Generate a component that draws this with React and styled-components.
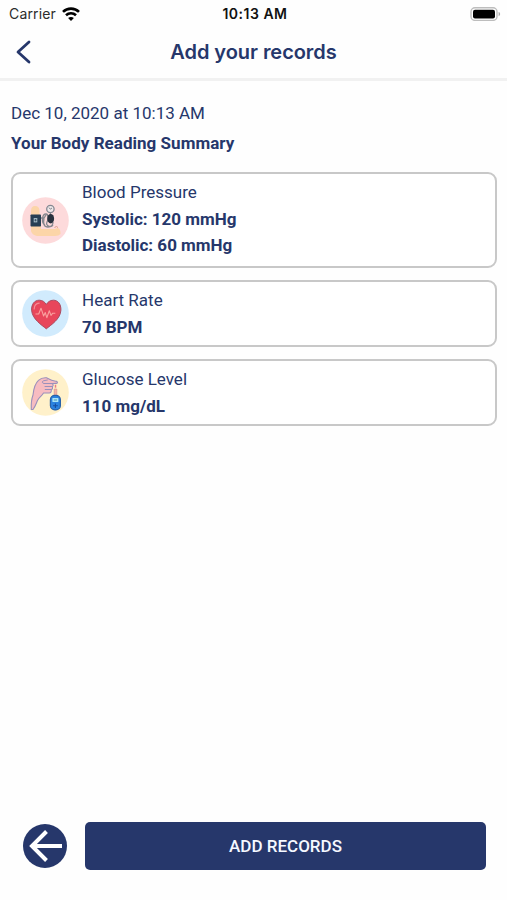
import React from "react";
import styled, { createGlobalStyle } from "styled-components";

const GlobalStyle = createGlobalStyle`
  * {
    box-sizing: border-box;
  }
  body {
    margin: 0;
    background: #fefefe;
    color: #26376b;
    font-family: Roboto, sans-serif;
  }
`;

const Screen = styled.div`
  display: flex;
  flex-direction: column;
  height: 900px;
  width: 507px;
  overflow: hidden;
`;

const StatusBar = styled.div`
  display: grid;
  grid-template-columns: 1fr auto 1fr;
  align-items: center;
  height: 27px;
  padding: 0 6px 0 9px;
  color: #111;
  font-family: Inter, sans-serif;
`;

const Carrier = styled.div`
  display: flex;
  align-items: center;
  gap: 6px;
  font-size: 14px;
  letter-spacing: 0.15px;
  color: #2c2c2c;
`;

const Clock = styled.div`
  font-size: 14px;
  font-weight: 600;
  letter-spacing: 0.5px;
`;

const StyledBattery = styled.svg`
  justify-self: end;
  display: block;
`;

const Header = styled.header`
  display: grid;
  grid-template-columns: 48px 1fr 48px;
  align-items: center;
  height: 54px;
  padding-bottom: 2px;
  border-bottom: 3px solid #f1f1f1;
`;

const BackLink = styled.a`
  display: flex;
  padding-left: 15px;
  cursor: pointer;
`;

const Title = styled.h1`
  margin: 0;
  font-family: Inter, sans-serif;
  font-size: 20px;
  font-weight: 600;
  letter-spacing: -0.05px;
  text-align: center;
`;

const Content = styled.main`
  flex: 1;
  padding: 17px 10px 0 11px;
`;

const DateText = styled.p`
  margin: 0;
  font-size: 17px;
  line-height: 30px;
`;

const Subtitle = styled.h2`
  margin: 0 0 14px;
  font-size: 17px;
  font-weight: 700;
  letter-spacing: 0.03px;
  line-height: 30px;
`;

const Card = styled.section`
  display: flex;
  align-items: center;
  gap: 13px;
  height: ${(props) => (props.$tall ? "96px" : "67px")};
  margin-bottom: 12px;
  padding: 5px 9px;
  border: 2px solid #c8c8c8;
  border-radius: 9px;
  background: white;
`;

const Reading = styled.div`
  align-self: flex-start;
`;

const Label = styled.p`
  margin: 0;
  font-size: 17px;
  line-height: 26.5px;
`;

const Value = styled.p`
  margin: 0;
  font-size: 17px;
  font-weight: 700;
  line-height: 26.5px;
`;

const CardIcon = styled.svg`
  display: block;
  width: 47px;
  height: 47px;
  flex-shrink: 0;
`;

const Footer = styled.footer`
  display: flex;
  align-items: center;
  gap: 18px;
  padding: 0 21px 30px 23px;
`;

const RoundButton = styled.button`
  display: flex;
  align-items: center;
  justify-content: center;
  width: 44px;
  height: 44px;
  padding: 0;
  border: 0;
  border-radius: 50%;
  background: #26376b;
  cursor: pointer;
`;

const AddButton = styled.button`
  flex: 1;
  height: 48px;
  padding: 0;
  border: 0;
  border-radius: 5px;
  background: #26376b;
  color: #f5f8ff;
  font-family: Roboto, sans-serif;
  font-size: 17px;
  font-weight: 500;
  cursor: pointer;
`;

const WifiIcon = () => (
  <svg width="18" height="14" viewBox="0 0 18 14" fill="none" stroke="#000" strokeWidth="2.6">
    <path d="M1 4.9C5.4 .5 12.6 .5 17 4.9" />
    <path d="M4 8.3c2.8-2.7 7.2-2.7 10 0" />
    <path d="M9 13.9 6.1 11c1.7-1.5 4.1-1.5 5.8 0Z" fill="#000" stroke="none" />
  </svg>
);

const BatteryIcon = () => (
  <StyledBattery width="31" height="14" viewBox="0 0 31 14">
    <rect x="1" y="0.8" width="26" height="12.6" rx="4" fill="#fff" stroke="#bdbdbd" strokeWidth="1.4" />
    <rect x="3" y="2.8" width="22" height="8.6" rx="2" fill="#000" />
    <path d="M28.6 5v4.2c2-.7 2-3.5 0-4.2Z" fill="#a9a9a9" />
  </StyledBattery>
);

const BloodPressureIcon = () => (
  <CardIcon viewBox="0 0 47 47" fill="none">
    <circle cx="23.5" cy="23.5" r="23.3" fill="#fddadb" />
    <path d="M9 18V14q0-5 4-5 4.5 0 4.5 5v4ZM9 29h10v3h14c3.5-3 6 1 5.5 5Q37 39 33 39H15q-5-1-6-5Z" fill="#fcd5a8" />
    <path d="M19 21h3l2-3M23 28c-4-2-3-11 1-11 3 0 2 7 1 8-2 4 4 6 6 3M22 21c-1 6 0 9 4 9s5-3 5-5" stroke="#85868d" strokeWidth="1.3" />
    <rect x="8.5" y="17.5" width="10.5" height="12" rx=".8" fill="#263f53" />
    <rect x="11.7" y="21" width="3.6" height="4.4" fill="#9bb3bd" />
    <path d="M13.5 22v2.4M12.3 23.2h2.4" stroke="#263f53" strokeWidth=".7" />
    <circle cx="28.4" cy="12" r="3.7" fill="#eee7e8" stroke="#858891" strokeWidth="1.3" />
    <path d="m27 10.6 1.5 1.6 1.4-1.2M28.4 15.8v2" stroke="#777b83" />
    <ellipse cx="28.7" cy="21.7" rx="3.4" ry="4.8" fill="#29323e" />
    <path d="M32.5 30.5q2-2 3.5 0" stroke="#df9b87" />
  </CardIcon>
);

const HeartIcon = () => (
  <CardIcon viewBox="0 0 47 47" fill="none">
    <circle cx="23.5" cy="23.5" r="23.3" fill="#d1ebfd" />
    <path
      d="M24.3 38.8C20 35.2 10.2 29.2 9.6 20.2 9.4 14 12.6 10.2 17.2 10.2c3.5 0 5.7 1.9 7.1 4.3 1.4-2.4 3.7-4.3 7.1-4.3 4.6 0 7.7 3.8 7.5 10-.4 9-10.3 15-14.6 18.6Z"
      fill="#e8465b"
      stroke="#a94c61"
      strokeWidth="1"
    />
    <path d="M12.2 19c.1-3.7 2-5.8 5-5.9" stroke="#f58a94" strokeWidth="1.2" strokeLinecap="round" />
    <path
      d="M13.5 24h3.2l2.3-5.8 2.6 7.8 1.7-3.4 1.5 5.1 2.5-7 1.7 4.7 1.7-2.2h2.6"
      stroke="#f9a09f"
      strokeWidth="1.1"
      strokeLinejoin="round"
    />
  </CardIcon>
);

const GlucoseIcon = () => (
  <CardIcon viewBox="0 0 47 47" fill="none">
    <circle cx="23.5" cy="23.5" r="23.3" fill="#fff1ca" />
    <path
      d="M9.3 40.5C9 34 9.5 30 11 26c.5-5 1.3-11 5.5-14.7 2-1.9 5.5-2.7 8-2.5l3 1.5c2.4 1.4 4.8 1.5 7.2 2.1 1.3.5.8 2-.5 2l-4.2.1c1.5.8 1.6 2.5.2 3 .8 1.5.3 2.7-1 3 .4 2-.3 3.3-2 3.5h-5.7c-1.5 3-4.5 4-6 7.5-1.3 3-2.2 6-4.5 9Z"
      fill="#f7bcc1"
      stroke="#9a90bb"
      strokeWidth="1.1"
      strokeLinejoin="round"
    />
    <path d="M30 14.5h-8c-1.8-.2-2.3-2-.6-2.7l4-.8M30.2 17.5H23M29.2 20.5h-6" stroke="#9a90bb" strokeWidth="1" strokeLinecap="round" />
    <path d="M33.5 15.7v3" stroke="#ee7c83" strokeWidth="1.5" />
    <path d="M32.2 20h2.6v7h-2.6Z" fill="#f4b5a5" stroke="#d58c8c" strokeWidth=".6" />
    <rect x="28.4" y="26.3" width="10" height="14.6" rx="4.4" fill="#2b82df" stroke="#2862a9" strokeWidth="1.2" />
    <rect x="30.4" y="29" width="6" height="4.1" rx=".6" fill="#a9e4f5" />
    <path d="M31.8 31h3.2" stroke="#387ca7" strokeWidth=".8" />
    <path d="M33.4 34.5v4.5M31 36.8h4.8" stroke="#174d9e" strokeWidth="1.1" />
  </CardIcon>
);

const readings = [
  { label: "Blood Pressure", values: ["Systolic: 120 mmHg", "Diastolic: 60 mmHg"], icon: <BloodPressureIcon /> },
  { label: "Heart Rate", values: ["70 BPM"], icon: <HeartIcon /> },
  { label: "Glucose Level", values: ["110 mg/dL"], icon: <GlucoseIcon /> },
];

const App = function () {
  return (
    <Screen>
      <GlobalStyle />
      <StatusBar>
        <Carrier>
          Carrier <WifiIcon />
        </Carrier>
        <Clock>10:13 AM</Clock>
        <BatteryIcon />
      </StatusBar>
      <Header>
        <BackLink aria-label="Back">
          <svg width="17" height="24" viewBox="0 0 17 24" fill="none">
            <path d="M14 2 3 12l11 10" stroke="#26376b" strokeWidth="2.8" strokeLinecap="round" strokeLinejoin="round" />
          </svg>
        </BackLink>
        <Title>Add your records</Title>
      </Header>
      <Content>
        <DateText>Dec 10, 2020 at 10:13 AM</DateText>
        <Subtitle>Your Body Reading Summary</Subtitle>
        {readings.map((reading) => (
          <Card key={reading.label} $tall={reading.values.length > 1}>
            {reading.icon}
            <Reading>
              <Label>{reading.label}</Label>
              {reading.values.map((value) => (
                <Value key={value}>{value}</Value>
              ))}
            </Reading>
          </Card>
        ))}
      </Content>
      <Footer>
        <RoundButton aria-label="Previous">
          <svg width="44" height="44" viewBox="0 0 44 44" fill="none" stroke="#fff" strokeWidth="4">
            <path d="M39 22H9M23.5 7.5 9 22l14.5 14.5" />
          </svg>
        </RoundButton>
        <AddButton>ADD RECORDS</AddButton>
      </Footer>
    </Screen>
  );
};

export default App;
